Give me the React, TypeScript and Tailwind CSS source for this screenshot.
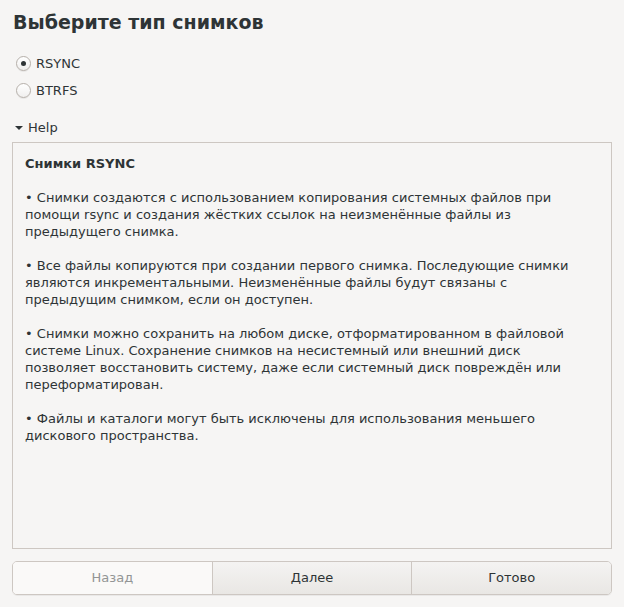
import React from 'react';

const paragraphs: string[][] = [
  [
    '• Снимки создаются с использованием копирования системных файлов при',
    'помощи rsync и создания жёстких ссылок на неизменённые файлы из',
    'предыдущего снимка.',
  ],
  [
    '• Все файлы копируются при создании первого снимка. Последующие снимки',
    'являются инкрементальными. Неизменённые файлы будут связаны с',
    'предыдущим снимком, если он доступен.',
  ],
  [
    '• Снимки можно сохранить на любом диске, отформатированном в файловой',
    'системе Linux. Сохранение снимков на несистемный или внешний диск',
    'позволяет восстановить систему, даже если системный диск повреждён или',
    'переформатирован.',
  ],
  [
    '• Файлы и каталоги могут быть исключены для использования меньшего',
    'дискового пространства.',
  ],
];

function Radio({ label, checked }: { label: string; checked?: boolean }) {
  return (
    <div className="flex h-[27px] items-center gap-[5px]">
      <span className="grid h-[15px] w-[15px] place-items-center rounded-full border border-[#b6b0aa] bg-gradient-to-b from-[#ffffff] to-[#f0efee] shadow-[0_1px_0_rgba(0,0,0,0.06)]">
        {checked && <span className="h-[5px] w-[5px] rounded-full bg-[#2e3436]" />}
      </span>
      <span>{label}</span>
    </div>
  );
}

export default function App() {
  return (
    <div
      className="flex h-[607px] w-[624px] flex-col bg-[#f6f5f4] px-3 text-[13px] text-[#2e3436]"
      style={{ fontFamily: '"DejaVu Sans", sans-serif' }}
    >
      {/* title */}
      <h1 className="mt-[10px] h-[24px] pl-[1px] text-[19px] leading-[24px] font-bold">Выберите тип снимков</h1>

      {/* radios */}
      <div className="mt-[16px] flex flex-col pl-[4px] leading-[17px]">
        <Radio label="RSYNC" checked />
        <Radio label="BTRFS" />
      </div>

      {/* help expander */}
      <div className="mt-[15px] flex h-[17px] items-center gap-[5px] pl-[3px] leading-[17px]">
        <svg width="8" height="6" viewBox="0 0 8 6">
          <path d="M0 1 L8 1 L4 5 Z" fill="#2e3436" />
        </svg>
        <span>Help</span>
      </div>

      {/* help text */}
      <div className="mt-[6px] h-[407px] border border-[#cdc7c2] bg-[#f6f5f4] px-3 pt-[12px] leading-[17px]">
        <div className="font-bold">Снимки RSYNC</div>
        {paragraphs.map((p, i) => (
          <div key={i} className="mt-[17px]">
            {p.map((line, j) => (
              <div key={j} className="whitespace-nowrap">
                {line}
              </div>
            ))}
          </div>
        ))}
      </div>

      {/* buttons */}
      <div className="mt-[12px] flex h-[34px] overflow-hidden rounded-[5px] border border-[#cdc7c2] shadow-[0_1px_0_rgba(0,0,0,0.05)]">
        <button className="flex-1 bg-[#faf9f8] text-[#929595]">Назад</button>
        <button className="flex-1 border-l border-[#cdc7c2] bg-gradient-to-b from-[#f4f3f2] to-[#e9e7e4]">Далее</button>
        <button className="flex-1 border-l border-[#cdc7c2] bg-gradient-to-b from-[#f4f3f2] to-[#e9e7e4]">Готово</button>
      </div>
    </div>
  );
}
